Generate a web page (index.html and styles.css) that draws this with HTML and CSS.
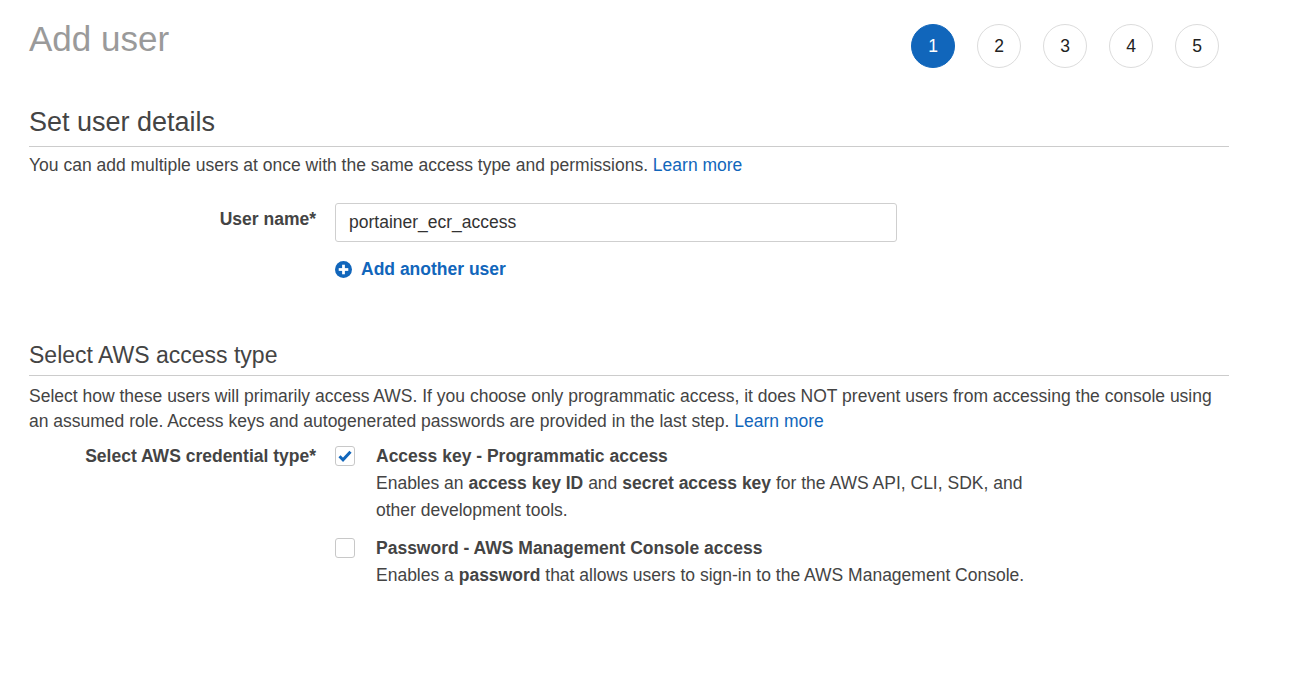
FILE: index.html
```html
<!DOCTYPE html>
<html>
<head>
<meta charset="utf-8">
<title>Add user</title>
<link rel="stylesheet" href="styles.css">
</head>
<body>
<div class="page">
  <header class="top">
    <h1 class="title">Add user</h1>
    <ol class="steps">
      <li class="step active">1</li>
      <li class="step">2</li>
      <li class="step">3</li>
      <li class="step">4</li>
      <li class="step">5</li>
    </ol>
  </header>

  <section class="section">
    <h2 class="section-title first-title">Set user details</h2>
    <p class="desc">You can add multiple users at once with the same access type and permissions. <a class="link" href="#">Learn more</a></p>
    <div class="form-row">
      <label class="label">User name*</label>
      <div class="control">
        <div class="input">portainer_ecr_access</div>
        <a class="add-user" href="#">
          <svg class="plus" width="17" height="17" viewBox="0 0 16 16"><circle cx="8" cy="8" r="8" fill="#1166bb"/><rect x="3.5" y="6.7" width="9" height="2.6" fill="#fff"/><rect x="6.7" y="3.5" width="2.6" height="9" fill="#fff"/></svg>
          <span>Add another user</span>
        </a>
      </div>
    </div>
  </section>

  <section class="section second">
    <h2 class="section-title second-title">Select AWS access type</h2>
    <p class="desc">Select how these users will primarily access AWS. If you choose only programmatic access, it does NOT prevent users from accessing the console using an assumed role. Access keys and autogenerated passwords are provided in the last step. <a class="link" href="#">Learn more</a></p>
    <div class="form-row cred">
      <label class="label">Select AWS credential type*</label>
      <div class="control options">
        <div class="option">
          <span class="checkbox checked"><svg width="14" height="12" viewBox="0 0 14 12"><path d="M1.5 6.3 L5 9.8 L12.5 1.8" fill="none" stroke="#1166bb" stroke-width="3"/></svg></span>
          <div class="opt-text">
            <div class="opt-title">Access key - Programmatic access</div>
            <div class="opt-desc">Enables an <b>access key ID</b> and <b>secret access key</b> for the AWS API, CLI, SDK, and other development tools.</div>
          </div>
        </div>
        <div class="option">
          <span class="checkbox"></span>
          <div class="opt-text">
            <div class="opt-title">Password - AWS Management Console access</div>
            <div class="opt-desc">Enables a <b>password</b> that allows users to sign-in to the AWS Management Console.</div>
          </div>
        </div>
      </div>
    </div>
  </section>
</div>
</body>
</html>
```

FILE: styles.css
```css
* { box-sizing: border-box; }
html, body { margin: 0; padding: 0; background: #fff; }
body {
  font-family: "Liberation Sans", Arial, sans-serif;
  font-size: 17.5px;
  color: #444;
}
.page {
  width: 1229px;
  padding-left: 29px;
}
.top {
  display: flex;
  justify-content: space-between;
  align-items: flex-start;
  height: 106px;
}
.title {
  margin: 19px 0 0;
  font-size: 35px;
  line-height: 40px;
  font-weight: normal;
  color: #9a9a9a;
}
.steps {
  list-style: none;
  margin: 24px 10px 0 0;
  padding: 0;
  display: flex;
  gap: 22px;
}
.step {
  width: 44px;
  height: 44px;
  border-radius: 50%;
  border: 1px solid #dcdcdc;
  display: flex;
  align-items: center;
  justify-content: center;
  font-size: 17.5px;
  color: #222;
}
.step.active {
  background: #1166bb;
  border-color: #1166bb;
  color: #fff;
}
.section-title {
  margin: 0;
  font-weight: normal;
  color: #444;
  border-bottom: 1px solid #ccc;
}
.first-title {
  font-size: 27px;
  line-height: 32px;
  padding-bottom: 8px;
}
.second-title {
  font-size: 23px;
  line-height: 28px;
  padding-bottom: 6px;
}
.second { margin-top: 62px; }
.desc {
  margin: 6px 0 0;
  line-height: 25px;
}
.second .desc { margin-top: 8px; }
.link { color: #1166bb; text-decoration: none; }
.form-row {
  display: grid;
  grid-template-columns: 287px 1fr;
  column-gap: 19px;
  margin-top: 25px;
}
.label {
  text-align: right;
  font-weight: bold;
  line-height: 20px;
  padding-top: 6px;
}
.control { display: flex; flex-direction: column; align-items: flex-start; }
.input {
  width: 562px;
  height: 39px;
  border: 1px solid #cfcfcf;
  border-radius: 3px;
  padding: 0 13px;
  line-height: 37px;
  color: #333;
}
.add-user {
  display: inline-flex;
  align-items: center;
  gap: 9px;
  margin-top: 17px;
  color: #1166bb;
  font-weight: bold;
  font-size: 17.5px;
  text-decoration: none;
}
.add-user span { line-height: 20px; }
.cred { margin-top: 9px; }
.cred .label { padding-top: 3px; }
.options {
  display: flex;
  flex-direction: column;
  gap: 11px;
}
.option {
  display: flex;
  gap: 21px;
}
.checkbox {
  flex: none;
  width: 20px;
  height: 20px;
  margin-top: 3px;
  border: 1px solid #c8c8c8;
  border-radius: 3px;
  display: flex;
  align-items: center;
  justify-content: center;
}
.opt-text { width: 670px; }
.opt-title {
  font-weight: bold;
  line-height: 27px;
}
.opt-desc {
  line-height: 27px;
}
```
